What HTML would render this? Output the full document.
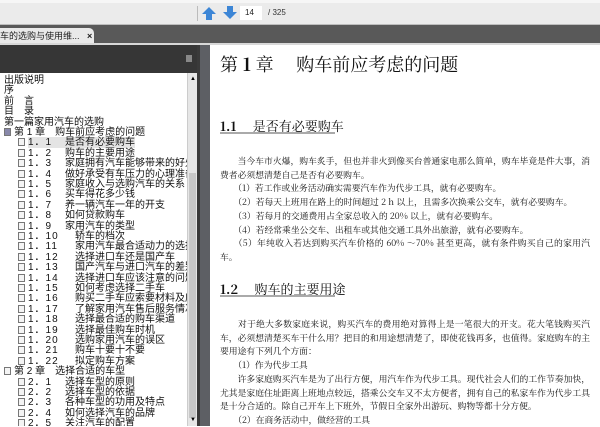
<!DOCTYPE html>
<html><head><meta charset="utf-8"><style>
*{margin:0;padding:0;box-sizing:border-box}
body{width:600px;height:426px;overflow:hidden;position:relative;background:#fff;font-family:"Liberation Sans","Noto Sans CJK SC",sans-serif}
.abs{position:absolute}
#tb{left:0;top:0;width:600px;height:25px;background:#ebebeb;border-top:3px solid #f6f6f6;border-bottom:1px solid #bdbdbd}
#band{left:0;top:25px;width:600px;height:19px;background:#595959}
#tab{left:0;top:28px;width:94px;height:16px;background:#e9e9e9;border-radius:0 5px 0 0;font-size:9px;line-height:16px;color:#222;white-space:nowrap;overflow:hidden}
#line{left:0;top:43px;width:600px;height:2px;background:#d8d8d8}
#lh{left:0;top:45px;width:200px;height:28px;background:#363636}
#list{left:0;top:74px;width:188px;height:352px;background:#fff;font-size:10px;color:#111;overflow:hidden}
#sb{left:187px;top:73px;width:10px;height:353px;background:#e6e6e6;border-left:1px solid #ccc}
#sbr{left:197px;top:45px;width:3px;height:381px;background:#3a3a3a}
#gut{left:200px;top:45px;width:10px;height:381px;background:#5d5f64}
#page{left:210px;top:45px;width:390px;height:381px;background:#fff}
.r{position:absolute;height:10.4px;line-height:10.4px;white-space:nowrap}
.ic{display:inline-block;width:7px;height:8px;border:1px solid #777;background:#f4f4f4;vertical-align:-1px;margin-right:3px}
.n{display:inline-block;width:37px;letter-spacing:1px}
.n2{display:inline-block;width:47px;letter-spacing:1px}
.p{position:absolute;left:10px;width:370px;font-size:8.8px;line-height:13.7px;color:#111;text-align:justify;text-align-last:left;font-family:"Noto Serif CJK SC","Liberation Serif",serif}
.h{position:absolute;left:10px;font-size:13px;color:#111;font-family:"Noto Serif CJK SC","Liberation Serif",serif;white-space:nowrap}
.u{position:absolute;left:10px;width:115px;height:2px;background:#aaa}
</style></head><body>
<div id="tb" class="abs"></div>
<div class="abs" style="left:197px;top:6px;width:1px;height:15px;background:#bbb"></div>
<svg class="abs" style="left:202px;top:7px" width="14" height="14"><path d="M7 0 L14 7 L10 7 L10 13 L4 13 L4 7 L0 7 Z" fill="#3d86d6"/></svg>
<svg class="abs" style="left:223px;top:6px" width="14" height="14"><path d="M4 0 L10 0 L10 6 L14 6 L7 13 L0 6 L4 6 Z" fill="#3d86d6"/></svg>
<div class="abs" style="left:240px;top:6px;width:22px;height:14px;background:#fff;font-size:8px;line-height:14px;padding-left:5px;color:#222">14</div>
<div class="abs" style="left:268px;top:6px;font-size:8px;line-height:14px;color:#333">/ 325</div>
<div id="band" class="abs"></div>
<div id="tab" class="abs">车的选购与使用维... <span style="margin-left:5px;font-weight:bold">×</span></div>
<div id="line" class="abs"></div>
<div id="lh" class="abs"></div>
<div class="abs" style="left:186px;top:55px;width:6px;height:7px;background:#888"></div>
<div id="list" class="abs">
<div class="r" style="left:4px;top:2px">出版说明</div>
<div class="r" style="left:4px;top:12.4px">序</div>
<div class="r" style="left:4px;top:22.8px">前　言</div>
<div class="r" style="left:4px;top:33.2px">目　录</div>
<div class="r" style="left:4px;top:43.6px">第一篇家用汽车的选购</div>
<div class="r" style="left:4px;top:54px"><span class="ic" style="background:#88a"></span>第 1 章　购车前应考虑的问题</div>
<div class="r" style="left:18px;top:64.4px"><span class="ic"></span><span style="background:#e4e4e4"><span class="n">1．1</span>是否有必要购车</span></div>
<div class="r" style="left:18px;top:74.8px"><span class="ic"></span><span class="n">1．2</span>购车的主要用途</div>
<div class="r" style="left:18px;top:85.2px"><span class="ic"></span><span class="n">1．3</span>家庭拥有汽车能够带来的好处</div>
<div class="r" style="left:18px;top:95.6px"><span class="ic"></span><span class="n">1．4</span>做好承受有车压力的心理准备</div>
<div class="r" style="left:18px;top:106px"><span class="ic"></span><span class="n">1．5</span>家庭收入与选购汽车的关系</div>
<div class="r" style="left:18px;top:116.4px"><span class="ic"></span><span class="n">1．6</span>买车得花多少钱</div>
<div class="r" style="left:18px;top:126.8px"><span class="ic"></span><span class="n">1．7</span>养一辆汽车一年的开支</div>
<div class="r" style="left:18px;top:137.2px"><span class="ic"></span><span class="n">1．8</span>如何贷款购车</div>
<div class="r" style="left:18px;top:147.6px"><span class="ic"></span><span class="n">1．9</span>家用汽车的类型</div>
<div class="r" style="left:18px;top:158px"><span class="ic"></span><span class="n2">1．10</span>轿车的档次</div>
<div class="r" style="left:18px;top:168.4px"><span class="ic"></span><span class="n2">1．11</span>家用汽车最合适动力的选择</div>
<div class="r" style="left:18px;top:178.8px"><span class="ic"></span><span class="n2">1．12</span>选择进口车还是国产车</div>
<div class="r" style="left:18px;top:189.2px"><span class="ic"></span><span class="n2">1．13</span>国产汽车与进口汽车的差别</div>
<div class="r" style="left:18px;top:199.6px"><span class="ic"></span><span class="n2">1．14</span>选择进口车应该注意的问题</div>
<div class="r" style="left:18px;top:210px"><span class="ic"></span><span class="n2">1．15</span>如何考虑选择二手车</div>
<div class="r" style="left:18px;top:220.4px"><span class="ic"></span><span class="n2">1．16</span>购买二手车应索要材料及应注</div>
<div class="r" style="left:18px;top:230.8px"><span class="ic"></span><span class="n2">1．17</span>了解家用汽车售后服务情况</div>
<div class="r" style="left:18px;top:241.2px"><span class="ic"></span><span class="n2">1．18</span>选择最合适的购车渠道</div>
<div class="r" style="left:18px;top:251.6px"><span class="ic"></span><span class="n2">1．19</span>选择最佳购车时机</div>
<div class="r" style="left:18px;top:262px"><span class="ic"></span><span class="n2">1．20</span>选购家用汽车的误区</div>
<div class="r" style="left:18px;top:272.4px"><span class="ic"></span><span class="n2">1．21</span>购车十要十不要</div>
<div class="r" style="left:18px;top:282.8px"><span class="ic"></span><span class="n2">1．22</span>拟定购车方案</div>
<div class="r" style="left:4px;top:293.2px"><span class="ic"></span>第 2 章　选择合适的车型</div>
<div class="r" style="left:18px;top:303.6px"><span class="ic"></span><span class="n">2．1</span>选择车型的原则</div>
<div class="r" style="left:18px;top:314px"><span class="ic"></span><span class="n">2．2</span>选择车型的依据</div>
<div class="r" style="left:18px;top:324.4px"><span class="ic"></span><span class="n">2．3</span>各种车型的功用及特点</div>
<div class="r" style="left:18px;top:334.8px"><span class="ic"></span><span class="n">2．4</span>如何选择汽车的品牌</div>
<div class="r" style="left:18px;top:345.2px"><span class="ic"></span><span class="n">2．5</span>关注汽车的配置</div>
</div>
<div id="sb" class="abs"><div style="position:absolute;left:1px;top:100px;width:7px;height:245px;background:#c8c8c8"></div><div style="position:absolute;left:2px;top:3px;font-size:6px">▲</div><div style="position:absolute;left:2px;bottom:3px;font-size:6px">▼</div></div>
<div id="sbr" class="abs"></div>
<div id="gut" class="abs"></div>
<div id="page" class="abs">
<div class="h" style="top:6px;font-size:18px">第 <b>1</b> 章　 购车前应考虑的问题</div>
<div class="h" style="top:71px"><b>1.1</b>　 是否有必要购车</div>
<div class="u" style="top:87px"></div>
<div class="p" style="top:109px">　　当今车市火爆，购车炙手，但也并非火到像买台普通家电那么简单，购车毕竟是件大事，消费者必须想清楚自己是否有必要购车。<br>　　（1）若工作或业务活动确实需要汽车作为代步工具，就有必要购车。<br>　　（2）若每天上班用在路上的时间超过 2 h 以上，且需多次换乘公交车，就有必要购车。<br>　　（3）若每月的交通费用占全家总收入的 20% 以上，就有必要购车。<br>　　（4）若经常乘坐公交车、出租车或其他交通工具外出旅游，就有必要购车。<br>　　（5）年纯收入若达到购买汽车价格的 60% ～70% 甚至更高，就有条件购买自己的家用汽车。</div>
<div class="h" style="top:234px"><b>1.2</b>　 购车的主要用途</div>
<div class="u" style="top:250px"></div>
<div class="p" style="top:272px">　　对于绝大多数家庭来说，购买汽车的费用绝对算得上是一笔很大的开支。花大笔钱购买汽车，必须想清楚买车干什么用？把目的和用途想清楚了，即使花钱再多，也值得。家庭购车的主要用途有下列几个方面：<br>　　（1）作为代步工具<br>　　许多家庭购买汽车是为了出行方便，用汽车作为代步工具。现代社会人们的工作节奏加快，尤其是家庭住址距离上班地点较远，搭乘公交车又不太方便者，拥有自己的私家车作为代步工具是十分合适的。除自己开车上下班外，节假日全家外出游玩、购物等都十分方便。<br>　　（2）在商务活动中，做经营的工具</div>
</div>
</body></html>
